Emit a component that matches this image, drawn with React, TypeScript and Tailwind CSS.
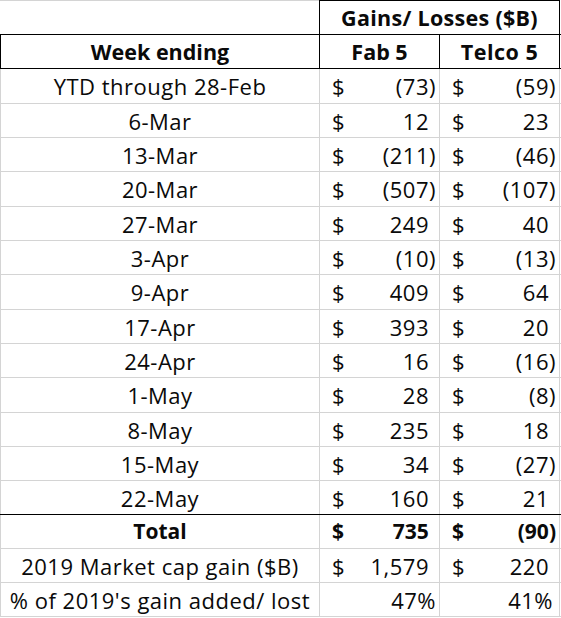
import React from "react";

const rows: [string, string, string, string][] = [
  ["YTD through 28-Feb", "(73)", "(59)", "h-[35px]"],
  ["6-Mar", "12", "23", "h-[34px]"],
  ["13-Mar", "(211)", "(46)", "h-[34px]"],
  ["20-Mar", "(507)", "(107)", "h-[35px]"],
  ["27-Mar", "249", "40", "h-[34px]"],
  ["3-Apr", "(10)", "(13)", "h-[34px]"],
  ["9-Apr", "409", "64", "h-[35px]"],
  ["17-Apr", "393", "20", "h-[34px]"],
  ["24-Apr", "16", "(16)", "h-[34px]"],
  ["1-May", "28", "(8)", "h-[35px]"],
  ["8-May", "235", "18", "h-[34px]"],
  ["15-May", "34", "(27)", "h-[34px]"],
  ["22-May", "160", "21", "h-[34px]"],
];

function Num({ v }: { v: string }) {
  const neg = v.startsWith("(");
  return (
    <span>
      {v}
      {!neg && <span className="invisible">)</span>}
    </span>
  );
}

function MoneyCell({ v, last, bold }: { v: string; last?: boolean; bold?: boolean }) {
  return (
    <div
      className={`flex items-center justify-between border-l border-[#d4d4d4] pl-[12px] ${
        last ? "w-[121px] border-r pr-[3px]" : "w-[120px] pr-[3px]"
      } ${bold ? "font-bold tracking-normal text-[21px]" : ""}`}
    >
      <span>$</span>
      <Num v={v} />
    </div>
  );
}

export default function App() {
  return (
    <div
      className="w-[561px] h-[618px] bg-white text-[#0a0a0a] text-[22px] tracking-[0.5px] leading-none"
      style={{ fontFamily: "'Open Sans', Lato, sans-serif" }}
    >
      {/* header row 1 */}
      <div className="flex h-[34px]">
        <div className="w-[319px] border-t border-[#d4d4d4]" />
        <div className="w-[241px] flex items-center justify-center border-t border-l border-r border-black font-bold text-[21.5px] tracking-[0.3px]">
          Gains/ Losses ($B)
        </div>
      </div>
      {/* header row 2 */}
      <div className="flex h-[34px] border-t border-black font-bold text-[21.5px] tracking-normal">
        <div className="w-[319px] flex items-center justify-center border-l border-black">Week ending</div>
        <div className="w-[120px] flex items-center justify-center border-l border-black">Fab 5</div>
        <div className="w-[121px] flex items-center justify-center border-l border-r border-black tracking-[0.5px]">
          Telco 5
        </div>
      </div>
      {rows.map(([label, a, b, h], i) => (
        <div
          key={label}
          className={`flex ${h} border-t ${i === 0 ? "border-black" : "border-[#d4d4d4]"}`}
        >
          <div className="w-[319px] flex items-center justify-center border-l border-[#d4d4d4]">{label}</div>
          <MoneyCell v={a} />
          <MoneyCell v={b} last />
        </div>
      ))}
      {/* total */}
      <div className="flex h-[34px] border-t border-black">
        <div className="w-[319px] flex items-center justify-center border-l border-[#d4d4d4] font-bold text-[21px] tracking-normal">
          Total
        </div>
        <MoneyCell v="735" bold />
        <MoneyCell v="(90)" last bold />
      </div>
      <div className="flex h-[34px] border-t border-[#d4d4d4]">
        <div className="w-[319px] flex items-center justify-center border-l border-[#d4d4d4]">
          2019 Market cap gain ($B)
        </div>
        <MoneyCell v="1,579" />
        <MoneyCell v="220" last />
      </div>
      <div className="flex h-[35px] border-t border-b border-[#d4d4d4]">
        <div className="w-[319px] flex items-center justify-center border-l border-[#d4d4d4]">
          % of 2019's gain added/ lost
        </div>
        <div className="w-[120px] flex items-center justify-end border-l border-[#d4d4d4] pr-[3px]">47%</div>
        <div className="w-[121px] flex items-center justify-end border-l border-r border-[#d4d4d4] pr-[6px]">41%</div>
      </div>
    </div>
  );
}
